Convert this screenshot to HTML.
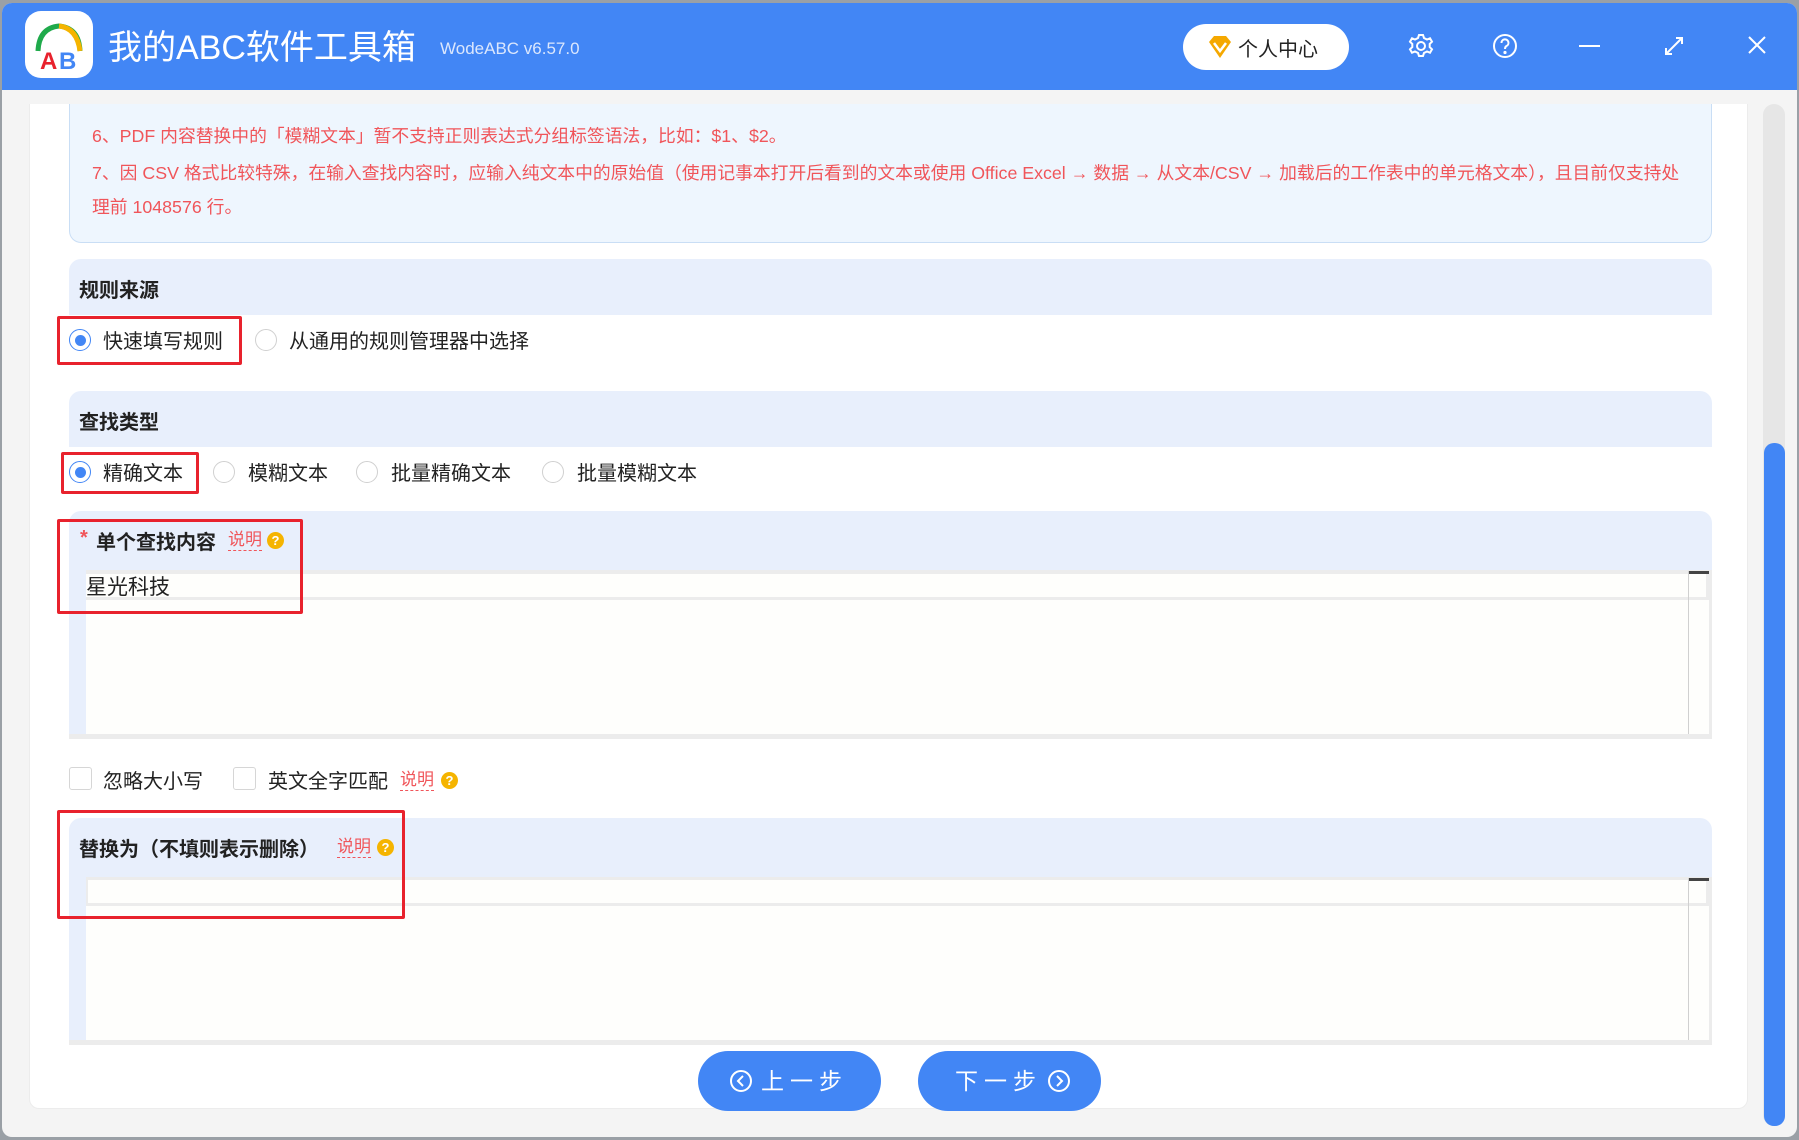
<!DOCTYPE html>
<html><head><meta charset="utf-8"><style>
*{box-sizing:border-box;margin:0;padding:0}
body{width:1799px;height:1140px;overflow:hidden;background:#9aa0a6;font-family:"Liberation Sans","Noto Sans CJK SC",sans-serif;position:relative}
.abs{position:absolute}
.win{left:2px;top:3px;width:1795px;height:1134px;background:#f4f4f4;border-radius:10px;overflow:hidden}
.bar{left:0;top:0;width:1795px;height:87px;background:#4286f5}
.panel{left:29px;top:104px;width:1719px;height:1005px;background:#fff;border-radius:0 0 10px 10px;border:1px solid #ececec;border-top:none}
.red{color:#f0555a;font-size:17.8px}
.hdr{background:#e8effc;border-radius:12px 12px 0 0;left:69px;width:1643px}
.ht{font-weight:bold;font-size:20px;color:#222}
.lab{font-size:20px;color:#222}
.radio{width:22px;height:22px;border-radius:50%;border:1px solid #d0d0d0;background:#fff}
.radio.on{border:1.5px solid #4286f5}
.radio.on::after{content:"";position:absolute;left:4.5px;top:4.5px;width:11px;height:11px;border-radius:50%;background:#4286f5}
.box{border:3px solid #e8222d;border-radius:2px}
.ta{left:69px;width:1643px;background:#ececec}
.cb{width:23px;height:23px;border:1px solid #d6d6d6;border-radius:3px;background:#fff}
.sm{font-size:17px;color:#f0555a;border-bottom:1.5px dashed #f0555a;line-height:20px}
.q{width:17px;height:17px;border-radius:50%;background:#f5b400;color:#fff;font-size:13px;text-align:center;line-height:17px;font-weight:bold}
.btn{background:#4286f5;border-radius:30px;color:#fff;font-size:23px;letter-spacing:6px;height:60px;width:183px;text-align:center;line-height:60px}
</style></head><body>
<div class="abs win">
 <div class="abs bar"></div>
</div>
<div class="abs" style="left:25px;top:11px;width:68px;height:67px;background:#fff;border-radius:16px"></div>
<svg class="abs" style="left:25px;top:11px" width="68" height="67" viewBox="0 0 68 67">
 <path d="M13 40 Q14 17 34 15 Q54 17 55 40" fill="none" stroke="#1faa4b" stroke-width="5"/>
 <path d="M34 15 Q52 17 55 40" fill="none" stroke="#f5b400" stroke-width="5"/>
 <text x="15" y="58" font-family="Liberation Sans" font-weight="bold" font-size="24" fill="#e8222d">A</text>
 <text x="34" y="58" font-family="Liberation Sans" font-weight="bold" font-size="24" fill="#4286f5">B</text>
</svg>
<div class="abs" style="left:108px;top:26px;color:#fff;font-size:34px;line-height:44px">我的ABC软件工具箱</div>
<div class="abs" style="left:440px;top:39px;color:#dbe7fd;font-size:17px">WodeABC v6.57.0</div>
<div class="abs" style="left:1183px;top:24px;width:166px;height:46px;background:#fff;border-radius:23px"></div>
<svg class="abs" style="left:1207px;top:35px" width="26" height="24" viewBox="0 0 26 24"><path d="M2 7 L7 1 L19 1 L24 7 L13 23 Z" fill="#f5a800"/><path d="M7 8 L13 16 L19 8" fill="none" stroke="#fff" stroke-width="2.5"/></svg>
<div class="abs" style="left:1238px;top:33px;font-size:20px;color:#222">个人中心</div>
<svg class="abs" style="left:1408px;top:33px" width="26" height="26" viewBox="0 0 26 26" fill="none" stroke="#fff" stroke-width="2"><circle cx="13" cy="13" r="4"/><path d="M11 2h4l1 3 3 1.5 3-1.2 2 3.4-2.3 2.2v3.2l2.3 2.2-2 3.4-3-1.2-3 1.5-1 3h-4l-1-3-3-1.5-3 1.2-2-3.4 2.3-2.2v-3.2L2 8.7l2-3.4 3 1.2L10 5z"/></svg>
<svg class="abs" style="left:1492px;top:33px" width="26" height="26" viewBox="0 0 26 26" fill="none" stroke="#fff" stroke-width="2"><circle cx="13" cy="13" r="11"/><path d="M9.5 10a3.5 3.5 0 1 1 5 3c-1.2.7-1.5 1.3-1.5 3"/><circle cx="13" cy="19.5" r="0.6" fill="#fff"/></svg>
<div class="abs" style="left:1579px;top:45px;width:21px;height:2px;background:#fff"></div>
<svg class="abs" style="left:1663px;top:35px" width="22" height="22" viewBox="0 0 22 22" fill="none" stroke="#fff" stroke-width="2"><path d="M3 19L19 3M13 3h6v6M3 13v6h6"/></svg>
<svg class="abs" style="left:1747px;top:35px" width="20" height="20" viewBox="0 0 20 20" stroke="#fff" stroke-width="2"><path d="M2 2L18 18M18 2L2 18"/></svg>

<div class="abs panel"></div>
<div class="abs" style="left:1763px;top:104px;width:22px;height:1022px;background:#e6e6e6;border-radius:11px"></div>
<div class="abs" style="left:1764px;top:443px;width:21px;height:683px;background:#4286f5;border-radius:10px"></div>

<div class="abs" style="left:69px;top:104px;width:1643px;height:139px;background:#eef6fe;border:1px solid #c9def5;border-top:none;border-radius:0 0 12px 12px"></div>
<div class="abs red" style="left:92px;top:122px">6、PDF 内容替换中的「模糊文本」暂不支持正则表达式分组标签语法，比如：$1、$2。</div>
<div class="abs red" style="left:92px;top:156px;width:1588px;line-height:34px">7、因 CSV 格式比较特殊，在输入查找内容时，应输入纯文本中的原始值（使用记事本打开后看到的文本或使用 Office Excel → 数据 → 从文本/CSV → 加载后的工作表中的单元格文本），且目前仅支持处理前 1048576 行。</div>

<div class="abs hdr" style="top:259px;height:56px"></div>
<div class="abs ht" style="left:79px;top:274px">规则来源</div>
<div class="abs radio on" style="left:69px;top:329px"></div>
<div class="abs lab" style="left:103px;top:325px">快速填写规则</div>
<div class="abs radio" style="left:255px;top:329px"></div>
<div class="abs lab" style="left:289px;top:325px">从通用的规则管理器中选择</div>
<div class="abs box" style="left:57px;top:316px;width:185px;height:49px"></div>

<div class="abs hdr" style="top:391px;height:56px"></div>
<div class="abs ht" style="left:79px;top:406px">查找类型</div>
<div class="abs radio on" style="left:69px;top:461px"></div>
<div class="abs lab" style="left:103px;top:457px">精确文本</div>
<div class="abs radio" style="left:213px;top:461px"></div>
<div class="abs lab" style="left:248px;top:457px">模糊文本</div>
<div class="abs radio" style="left:356px;top:461px"></div>
<div class="abs lab" style="left:391px;top:457px">批量精确文本</div>
<div class="abs radio" style="left:542px;top:461px"></div>
<div class="abs lab" style="left:577px;top:457px">批量模糊文本</div>
<div class="abs box" style="left:61px;top:452px;width:138px;height:42px"></div>

<div class="abs hdr" style="top:511px;height:60px"></div>
<div class="abs" style="left:80px;top:527px;color:#f0555a;font-size:20px;font-weight:bold">*</div>
<div class="abs ht" style="left:96px;top:526px">单个查找内容</div>
<div class="abs sm" style="left:228px;top:530px">说明</div>
<div class="abs q" style="left:267px;top:532px">?</div>
<div class="abs ta" style="top:570px;height:169px"></div>
<div class="abs" style="left:69px;top:570px;width:17px;height:164px;background:#e8effc"></div>
<div class="abs" style="left:86px;top:574px;width:1620px;height:23px;background:#fefefc"></div>
<div class="abs" style="left:86px;top:600px;width:1623px;height:134px;background:#fefefc"></div>
<div class="abs" style="left:1688px;top:571px;width:1px;height:163px;background:#d0d0d0"></div>
<div class="abs" style="left:1689px;top:571px;width:20px;height:3px;background:#444"></div>
<div class="abs" style="left:86px;top:571px;font-size:21px;color:#222">星光科技</div>
<div class="abs box" style="left:57px;top:519px;width:246px;height:95px"></div>

<div class="abs cb" style="left:69px;top:767px"></div>
<div class="abs lab" style="left:103px;top:765px">忽略大小写</div>
<div class="abs cb" style="left:233px;top:767px"></div>
<div class="abs lab" style="left:268px;top:765px">英文全字匹配</div>
<div class="abs sm" style="left:400px;top:770px">说明</div>
<div class="abs q" style="left:441px;top:772px">?</div>

<div class="abs hdr" style="top:818px;height:60px"></div>
<div class="abs ht" style="left:79px;top:833px">替换为（不填则表示删除）</div>
<div class="abs sm" style="left:337px;top:837px">说明</div>
<div class="abs q" style="left:377px;top:839px">?</div>
<div class="abs ta" style="top:877px;height:168px"></div>
<div class="abs" style="left:69px;top:877px;width:17px;height:163px;background:#e8effc"></div>
<div class="abs" style="left:88px;top:880px;width:1618px;height:23px;background:#fefefc"></div>
<div class="abs" style="left:86px;top:906px;width:1623px;height:134px;background:#fefefc"></div>
<div class="abs" style="left:1688px;top:878px;width:1px;height:162px;background:#d0d0d0"></div>
<div class="abs" style="left:1689px;top:878px;width:20px;height:3px;background:#444"></div>
<div class="abs box" style="left:57px;top:810px;width:348px;height:109px"></div>

<div class="abs btn" style="left:698px;top:1051px;text-indent:30px">上一步</div>
<svg class="abs" style="left:729px;top:1069px" width="24" height="24" viewBox="0 0 24 24" fill="none" stroke="#fff" stroke-width="2"><circle cx="12" cy="12" r="10"/><path d="M14 7l-5 5 5 5"/></svg>
<div class="abs btn" style="left:918px;top:1051px;text-indent:-22px">下一步</div>
<svg class="abs" style="left:1047px;top:1069px" width="24" height="24" viewBox="0 0 24 24" fill="none" stroke="#fff" stroke-width="2"><circle cx="12" cy="12" r="10"/><path d="M10 7l5 5-5 5"/></svg>
</body></html>
